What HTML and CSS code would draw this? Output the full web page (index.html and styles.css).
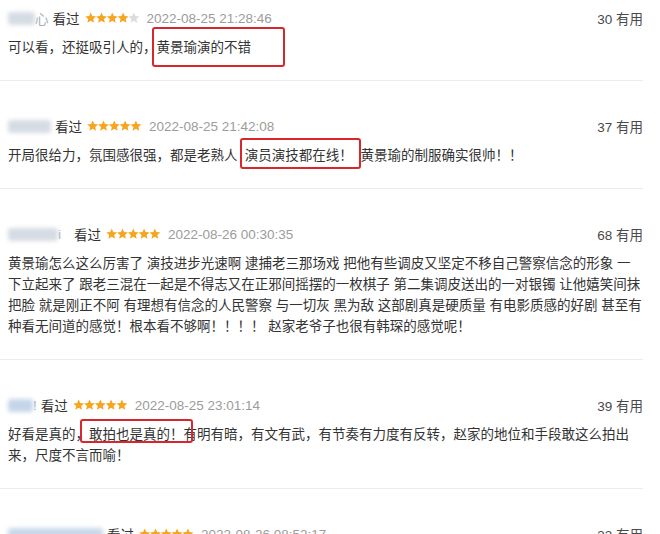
FILE: index.html
```html
<!DOCTYPE html>
<html lang="zh-CN">
<head>
    <meta charset="UTF-8">
    <meta name="viewport" content="width=device-width, initial-scale=1.0">
    <title>短评</title>
    <link rel="stylesheet" href="styles.css">
</head>
<body>

    <svg class="sprite" xmlns="http://www.w3.org/2000/svg">
        <symbol id="star" viewBox="0 0 10 10">
            <polygon points="5,0 6.35,3.14 9.76,3.45 7.19,5.71 7.94,9.05 5,7.3 2.06,9.05 2.81,5.71 0.24,3.45 3.65,3.14"/>
        </symbol>
    </svg>

    <ul class="reviews">

        <li class="review">
            <div class="review_head">
                <div class="meta">
                    <span class="nick"><span class="blur blur_1"></span>心</span>
                    <span class="seen">看过</span>
                    <svg class="stars" viewBox="0 0 55 12">
                        <use href="#star" x="0" y="0.5" width="11.4" height="11.4" class="on"/>
                        <use href="#star" x="10.8" y="0.5" width="11.4" height="11.4" class="on"/>
                        <use href="#star" x="21.6" y="0.5" width="11.4" height="11.4" class="on"/>
                        <use href="#star" x="32.4" y="0.5" width="11.4" height="11.4" class="on"/>
                        <use href="#star" x="43.2" y="0.5" width="11.4" height="11.4" class="off"/>
                    </svg>
                    <span class="date">2022-08-25 21:28:46</span>
                </div>
                <span class="votes">30 有用</span>
            </div>
            <p class="review_text">可以看，还挺吸引人的，<span class="mark mark_1">黄景瑜演的不错</span></p>
        </li>

        <li class="review">
            <div class="review_head">
                <div class="meta">
                    <span class="nick"><span class="blur blur_2"></span></span>
                    <span class="seen">看过</span>
                    <svg class="stars" viewBox="0 0 55 12">
                        <use href="#star" x="0" y="0.5" width="11.4" height="11.4" class="on"/>
                        <use href="#star" x="10.8" y="0.5" width="11.4" height="11.4" class="on"/>
                        <use href="#star" x="21.6" y="0.5" width="11.4" height="11.4" class="on"/>
                        <use href="#star" x="32.4" y="0.5" width="11.4" height="11.4" class="on"/>
                        <use href="#star" x="43.2" y="0.5" width="11.4" height="11.4" class="on"/>
                    </svg>
                    <span class="date">2022-08-25 21:42:08</span>
                </div>
                <span class="votes">37 有用</span>
            </div>
            <p class="review_text">开局很给力，氛围感很强，都是老熟人 <span class="mark mark_2">演员演技都在线！</span> 黄景瑜的制服确实很帅！！</p>
        </li>

        <li class="review">
            <div class="review_head">
                <div class="meta">
                    <span class="nick nick_wide"><span class="blur blur_3"></span>i</span>
                    <span class="seen">看过</span>
                    <svg class="stars" viewBox="0 0 55 12">
                        <use href="#star" x="0" y="0.5" width="11.4" height="11.4" class="on"/>
                        <use href="#star" x="10.8" y="0.5" width="11.4" height="11.4" class="on"/>
                        <use href="#star" x="21.6" y="0.5" width="11.4" height="11.4" class="on"/>
                        <use href="#star" x="32.4" y="0.5" width="11.4" height="11.4" class="on"/>
                        <use href="#star" x="43.2" y="0.5" width="11.4" height="11.4" class="on"/>
                    </svg>
                    <span class="date">2022-08-26 00:30:35</span>
                </div>
                <span class="votes">68 有用</span>
            </div>
            <p class="review_text">黄景瑜怎么这么厉害了 演技进步光速啊 逮捕老三那场戏 把他有些调皮又坚定不移自己警察信念的形象 一<br>下立起来了 跟老三混在一起是不得志又在正邪间摇摆的一枚棋子 第二集调皮送出的一对银镯 让他嬉笑间抹<br>把脸 就是刚正不阿 有理想有信念的人民警察 与一切灰 黑为敌 这部剧真是硬质量 有电影质感的好剧 甚至有<br>种看无间道的感觉！根本看不够啊！！！！ 赵家老爷子也很有韩琛的感觉呢！</p>
        </li>

        <li class="review">
            <div class="review_head">
                <div class="meta">
                    <span class="nick"><span class="blur blur_4"></span>!</span>
                    <span class="seen">看过</span>
                    <svg class="stars" viewBox="0 0 55 12">
                        <use href="#star" x="0" y="0.5" width="11.4" height="11.4" class="on"/>
                        <use href="#star" x="10.8" y="0.5" width="11.4" height="11.4" class="on"/>
                        <use href="#star" x="21.6" y="0.5" width="11.4" height="11.4" class="on"/>
                        <use href="#star" x="32.4" y="0.5" width="11.4" height="11.4" class="on"/>
                        <use href="#star" x="43.2" y="0.5" width="11.4" height="11.4" class="on"/>
                    </svg>
                    <span class="date">2022-08-25 23:01:14</span>
                </div>
                <span class="votes">39 有用</span>
            </div>
            <p class="review_text">好看是真的，<span class="mark mark_4">敢拍也是真的！</span>有明有暗，有文有武，有节奏有力度有反转，赵家的地位和手段敢这么拍出<br>来，尺度不言而喻！</p>
        </li>

        <li class="review">
            <div class="review_head">
                <div class="meta">
                    <span class="nick"><span class="blur blur_5"></span></span>
                    <span class="seen">看过</span>
                    <svg class="stars" viewBox="0 0 55 12">
                        <use href="#star" x="0" y="0.5" width="11.4" height="11.4" class="on"/>
                        <use href="#star" x="10.8" y="0.5" width="11.4" height="11.4" class="on"/>
                        <use href="#star" x="21.6" y="0.5" width="11.4" height="11.4" class="on"/>
                        <use href="#star" x="32.4" y="0.5" width="11.4" height="11.4" class="on"/>
                        <use href="#star" x="43.2" y="0.5" width="11.4" height="11.4" class="on"/>
                    </svg>
                    <span class="date">2022-08-26 08:52:17</span>
                </div>
                <span class="votes">33 有用</span>
            </div>
            <p class="review_text">好剧！</p>
        </li>

    </ul>

</body>
</html>
```

FILE: styles.css
```css
* {
    padding: 0;
    margin: 0;
    box-sizing: border-box;
}
body {
    background: #fff;
    font-family: "Liberation Sans", "Noto Sans CJK SC", sans-serif;
    font-size: 13.5px;
    color: #333;
}
.sprite {
    display: none;
}
.reviews {
    width: 643px;
    list-style-type: none;
}
.review {
    padding: 34px 0 22px 8px;
    border-bottom: 1px solid #e9ecf0;
}
.review:first-child {
    padding-top: 7px;
}
.review_head {
    display: flex;
    justify-content: space-between;
    align-items: center;
    height: 22px;
}
.meta {
    display: flex;
    align-items: center;
}

/* 가려진 닉네임 */
.nick {
    display: flex;
    align-items: center;
    margin-right: 4px;
    color: #a7afb8;
}
.nick_wide {
    margin-right: 13px;
}
.blur {
    display: inline-block;
    height: 13px;
    border-radius: 3px;
    background: #d6dce3;
    filter: blur(2px);
}
.blur_1 { width: 27px; }
.blur_2 { width: 43px; }
.blur_3 { width: 50px; }
.blur_4 { width: 25px; background: #c5d5e8; }
.blur_5 { width: 95px; background: #c9d8ea; }

.seen {
    color: #333;
}
.stars {
    width: 55px;
    height: 12px;
    margin-left: 5px;
}
.stars .on {
    fill: #f7a41e;
}
.stars .off {
    fill: #dcdcdc;
}
.date {
    margin-left: 7px;
    color: #9c9c9c;
}
.votes {
    color: #4a4a4a;
}
.review_text {
    margin-top: 8px;
    line-height: 21px;
    white-space: nowrap;
}

/* 빨간 표시 박스 */
.mark {
    position: relative;
}
.mark::after {
    content: "";
    position: absolute;
    border: 2.5px solid #d9262c;
    border-radius: 3px;
}
.mark_1::after {
    top: -13px;
    bottom: -12px;
    left: -4.5px;
    right: -34px;
}
.mark_2 {
    margin: 0 4px 0 3.5px;
}
.mark_2::after {
    top: -10.5px;
    bottom: -6px;
    left: -4.5px;
    right: -8.5px;
}
.mark_4::after {
    top: -8.5px;
    bottom: -0.5px;
    left: -9px;
    right: -9.5px;
}
```
